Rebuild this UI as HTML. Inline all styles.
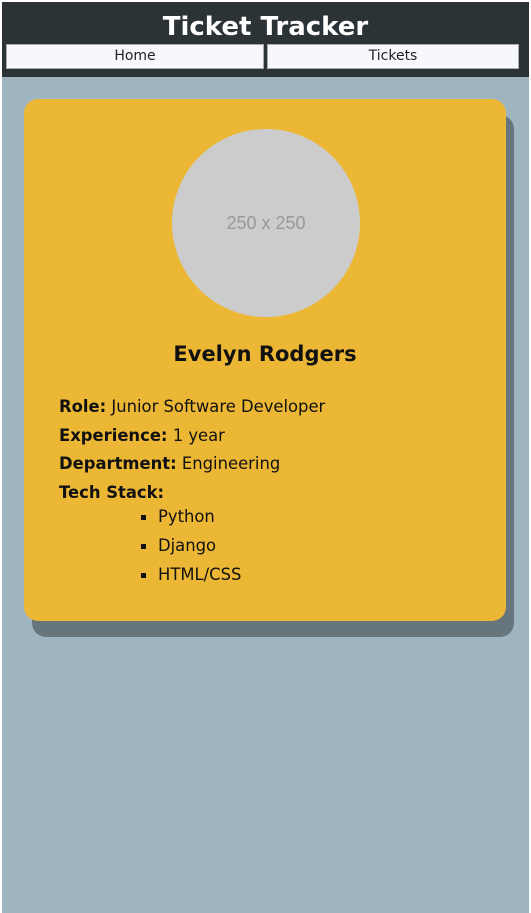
<!DOCTYPE html>
<html><head><style>
html,body{margin:0;padding:0;background:#fff;}
body{width:531px;height:913px;position:relative;overflow:hidden;font-family:"DejaVu Sans","Liberation Sans",sans-serif;}
.main{position:absolute;left:2px;top:2px;width:527px;height:911px;background:#9eb5bf;}
.hdr{position:absolute;left:0;top:0;width:527px;height:75px;background:#2c3336;}
.hdr h1{margin:0;position:absolute;top:6px;width:100%;text-align:center;color:#fff;font-size:26px;font-weight:bold;line-height:38px;}
.btn{position:absolute;top:42px;height:25px;background:#f7f8fb;border:1px solid #aaa;box-sizing:border-box;font-size:14px;line-height:23px;text-align:center;color:#222;}
.shadow{position:absolute;left:30px;top:113px;width:482px;height:522px;background:#67757c;border-radius:14px;}
.card{position:absolute;left:22px;top:97px;width:482px;height:522px;background:#ebb734;border-radius:14px;}
.circ{position:absolute;left:148px;top:30px;width:188px;height:188px;border-radius:50%;background:#cccccc;color:#999;font-family:"Liberation Sans",sans-serif;font-size:18px;text-align:center;line-height:188px;}
.name{position:absolute;top:243px;width:100%;text-align:center;font-size:21px;font-weight:bold;color:#111;}
.info{position:absolute;left:35px;top:294px;font-size:16.4px;line-height:28.6px;color:#111;}
ul{margin:-4px 0 0 0;padding:0 0 0 99px;list-style:square;}
li::marker{font-size:18px;}
</style></head><body>
<div class="main">
<div class="hdr"><h1>Ticket Tracker</h1>
<div class="btn" style="left:4px;width:258px">Home</div>
<div class="btn" style="left:265px;width:252px">Tickets</div>
</div>
<div class="shadow"></div>
<div class="card">
<div class="circ">250 x 250</div>
<div class="name">Evelyn Rodgers</div>
<div class="info">
<div><b>Role:</b> Junior Software Developer</div>
<div><b>Experience:</b> 1 year</div>
<div><b>Department:</b> Engineering</div>
<div><b>Tech Stack:</b></div>
<ul><li>Python</li><li>Django</li><li>HTML/CSS</li></ul>
</div>
</div>
</div>
</body></html>
